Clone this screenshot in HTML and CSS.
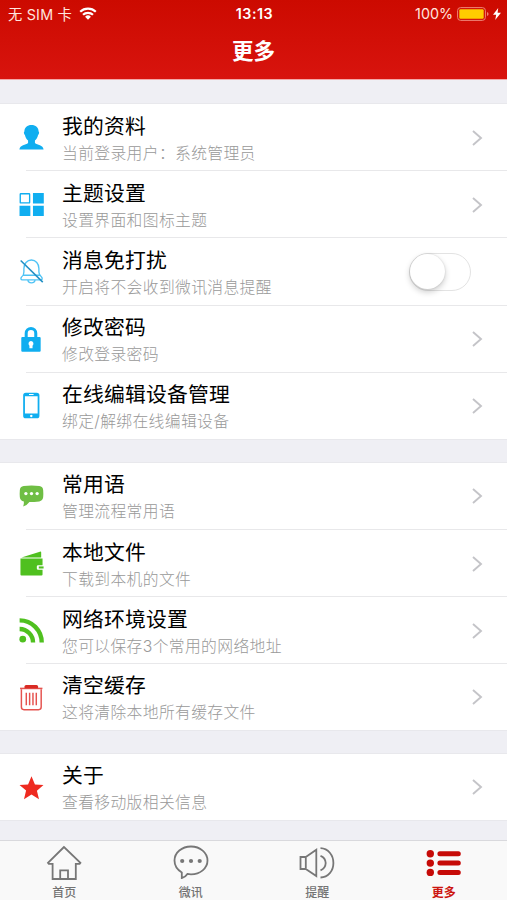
FILE: index.html
```
<!DOCTYPE html>
<html lang="zh-CN">
	<head>
		<meta charset="UTF-8" />
		<meta name="viewport" content="width=device-width, initial-scale=1" />
		<title>更多</title>
		<link rel="stylesheet" href="styles.css">
	</head>
	<body>
		<header>
			<div class="status-bar">
				<div class="status-left">
					<span>无 SIM 卡</span>
					<svg class="wifi" viewBox="0 0 18 13">
						<path d="M1.2 4.8a11.2 11.2 0 0 1 15.6 0M4 7.8a7.2 7.2 0 0 1 10 0" fill="none" stroke="#fff" stroke-width="2.2" />
						<path d="M9 12.8L6.1 9.8a4.1 4.1 0 0 1 5.8 0z" fill="#fff" />
					</svg>
				</div>
				<div class="status-time">13:13</div>
				<div class="status-right">
					<span>100%</span>
					<svg class="battery" viewBox="0 0 32 14">
						<rect x=".6" y=".6" width="27.8" height="12.8" rx="3" fill="none" stroke="#ef8577" />
						<rect x="2.3" y="2.3" width="24.4" height="9.4" rx="1.2" fill="#ffcc00" />
						<path d="M30 5v4q1.6-.6 1.6-2T30 5z" fill="#ef8577" />
					</svg>
					<svg class="bolt" viewBox="0 0 8 12"><path d="M5.2 0L0 6.8h3.2L2.2 12 8 4.8H4.6z" fill="#fff" /></svg>
				</div>
			</div>
			<h1>更多</h1>
		</header>

		<main>
			<section class="group">
				<div class="row">
					<svg class="icon blue" viewBox="0 0 24 24">
						<path d="M12 0C8 0 5.200 2.600 5.200 6.200c-.9.2-.5 2.800.5 3.400.5 2.400 1.500 4 3 5.300v2.300C6.500 19 .8 19 .4 23.600h23.200c-.4-4.600-6.100-4.600-8.300-6.400v-2.300c1.500-1.300 2.500-2.900 3-5.300 1-.6 1.400-3.200.5-3.400C18.800 2.600 16 0 12 0z" />
					</svg>
					<div class="text">
						<h2>我的资料</h2>
						<p>当前登录用户：系统管理员</p>
					</div>
					<svg class="chevron" viewBox="0 0 10 16"><path d="M1 1l8 7-8 7" /></svg>
				</div>
				<div class="row">
					<svg class="icon blue" viewBox="0 0 24 24">
						<rect x="1.2" y="1.700" width="9" height="8.800" rx=".5" fill="none" stroke="currentColor" stroke-width="1.3" />
						<path d="M13.400 1h10.400v10H13.400zM.5 13.300h10.400v9.700H.5zM13.400 13.300h10.400v9.700H13.400z" />
					</svg>
					<div class="text">
						<h2>主题设置</h2>
						<p>设置界面和图标主题</p>
					</div>
					<svg class="chevron" viewBox="0 0 10 16"><path d="M1 1l8 7-8 7" /></svg>
				</div>
				<div class="row">
					<svg class="icon sky line" viewBox="0 0 24 24">
						<path d="M2.500 17.300c1.800-1.300 2.200-2.200 2.200-4.800V9C4.700 4.500 7.700 1 11.900 1s7.200 3.500 7.200 8v3.500c0 2.600.7 3.500 2.500 4.800 1.200 1.200.7 2.800-.7 2.800H3.200c-1.400 0-1.900-1.600-.7-2.800zM4.500 15.600h15M8.600 20.200c0 3.600 6.800 3.600 6.800 0" />
						<path class="slash" d="M1.600 1.500l21.200 20.700" />
					</svg>
					<div class="text">
						<h2>消息免打扰</h2>
						<p>开启将不会收到微讯消息提醒</p>
					</div>
					<div class="switch"><div class="knob"></div></div>
				</div>
				<div class="row">
					<svg class="icon blue" viewBox="0 0 24 24">
						<path d="M6.900 11V6a4.600 4.600 0 0 1 9.200 0V11" fill="none" stroke="currentColor" stroke-width="2.900" />
						<path fill-rule="evenodd" d="M3.200 9.500h16.600q1 0 1 1v12.300q0 1-1 1H3.200q-1 0-1-1V10.500q0-1 1-1zM11.500 13.500a2.500 2.500 0 0 0-1.500 4.400v2.500h3v-2.500a2.500 2.500 0 0 0-1.500-4.400z" />
					</svg>
					<div class="text">
						<h2>修改密码</h2>
						<p>修改登录密码</p>
					</div>
					<svg class="chevron" viewBox="0 0 10 16"><path d="M1 1l8 7-8 7" /></svg>
				</div>
				<div class="row">
					<svg class="icon blue" viewBox="0 0 24 24">
						<path fill-rule="evenodd" d="M6.500-.3h10.600q2.500 0 2.500 2.500v19.600q0 2.500-2.500 2.500H6.500Q4 24.300 4 21.800V2.200Q4-.3 6.500-.3zM5.700 3v16.600h12.200V3zM9.600 1v.8H14V1zM11.800 20.800a1.200 1.200 0 1 0 .01 0z" />
					</svg>
					<div class="text">
						<h2>在线编辑设备管理</h2>
						<p>绑定/解绑在线编辑设备</p>
					</div>
					<svg class="chevron" viewBox="0 0 10 16"><path d="M1 1l8 7-8 7" /></svg>
				</div>
			</section>

			<section class="group">
				<div class="row">
					<svg class="icon green-soft" viewBox="0 0 24 24">
						<path d="M4.500 2Q12 .8 19.500 2q3.500.5 3.700 3.800.3 3.500 0 7-.4 3.400-3.700 3.900-5 .5-9.500.5-1.700 2.700-6 4.300.9-2.400.7-4.700Q1.100 16.200.8 12.800q-.3-3.500 0-7Q1 2.500 4.500 2z" />
						<circle cx="6.600" cy="9.200" r="1.600" fill="#fff" />
						<circle cx="12" cy="9.200" r="1.600" fill="#fff" />
						<circle cx="17.400" cy="9.200" r="1.600" fill="#fff" />
					</svg>
					<div class="text">
						<h2>常用语</h2>
						<p>管理流程常用语</p>
					</div>
					<svg class="chevron" viewBox="0 0 10 16"><path d="M1 1l8 7-8 7" /></svg>
				</div>
				<div class="row">
					<svg class="icon green" viewBox="0 0 24 24">
						<path d="M2.400 6.300L20 .6q1.300-.4 1.300 1v4.700z" />
						<path d="M1.400 7.200h21.200v6.400h-4.200q-1.300 0-1.300 1.300v1.800q0 1.300 1.300 1.300h4.200v4.600q0 1-1 1H2.400q-1 0-1-1z" />
						<path d="M19 14.800h4.600v2H19z" />
					</svg>
					<div class="text">
						<h2>本地文件</h2>
						<p>下载到本机的文件</p>
					</div>
					<svg class="chevron" viewBox="0 0 10 16"><path d="M1 1l8 7-8 7" /></svg>
				</div>
				<div class="row">
					<svg class="icon green" viewBox="0 0 24 24">
						<circle cx="3.600" cy="20.300" r="3.200" />
						<path d="M.6 10.600a13 13 0 0 1 12.900 13M.6 2.300a21.200 21.200 0 0 1 21.200 21.300" fill="none" stroke="currentColor" stroke-width="4.200" />
					</svg>
					<div class="text">
						<h2>网络环境设置</h2>
						<p>您可以保存3个常用的网络地址</p>
					</div>
					<svg class="chevron" viewBox="0 0 10 16"><path d="M1 1l8 7-8 7" /></svg>
				</div>
				<div class="row">
					<svg class="icon red-soft" viewBox="0 0 24 24">
						<path d="M1 3.300h21.500" fill="none" stroke="currentColor" stroke-width="1.500" />
						<path d="M5.300 3V1.500Q5.300 0 6.800 0h10q1.500 0 1.500 1.500V3z" fill="#d92b24" />
						<path d="M2.300 4v17.200q0 2.500 2.500 2.500h14q2.500 0 2.500-2.500V4M7 7.500v12M10.200 7.500v12M13.400 7.500v12M16.600 7.500v12" fill="none" stroke="currentColor" stroke-width="1.400" />
					</svg>
					<div class="text">
						<h2>清空缓存</h2>
						<p>这将清除本地所有缓存文件</p>
					</div>
					<svg class="chevron" viewBox="0 0 10 16"><path d="M1 1l8 7-8 7" /></svg>
				</div>
			</section>

			<section class="group">
				<div class="row">
					<svg class="icon red" viewBox="0 0 24 24">
						<path d="M12 1.300l3.300 7.700 8.200.6-6.300 5.400 2 8.300-7.200-4.500-7.200 4.500 2-8.300L.5 9.600l8.200-.6z" />
					</svg>
					<div class="text">
						<h2>关于</h2>
						<p>查看移动版相关信息</p>
					</div>
					<svg class="chevron" viewBox="0 0 10 16"><path d="M1 1l8 7-8 7" /></svg>
				</div>
			</section>
		</main>

		<nav>
			<a class="tab">
				<svg viewBox="0 0 36 36">
					<path d="M18 2L2 17.800l.8 1H6.600V34h23.200V18.800h3.800l.8-1zM14.200 34v-8.700h7.800V34" />
				</svg>
				<span>首页</span>
			</a>
			<a class="tab">
				<svg viewBox="0 0 36 36">
					<path d="M18 1.500C8.800 1.500 1.500 7.600 1.500 15.500c0 5 2.900 9.300 7.300 11.900V33q3.400-.7 5.600-4.100 1.700.4 3.600.4c9.200 0 16.500-6 16.500-13.800S27.200 1.500 18 1.500z" />
					<g class="dots">
						<circle cx="9.200" cy="16" r="2.100" />
						<circle cx="18" cy="16" r="2.100" />
						<circle cx="26.700" cy="16" r="2.100" />
					</g>
				</svg>
				<span>微讯</span>
			</a>
			<a class="tab">
				<svg viewBox="0 0 36 36">
					<path d="M1.500 12h5.300v12H1.500zM6.800 12L17.300 4.800V31L6.800 24zM21.500 10.800q5 2 5.200 7.200-.2 5.300-5.200 7.300M21.500 3.200C29.200 3.500 34.400 10 34.400 18s-5.200 14.200-12.900 14.500" />
				</svg>
				<span>提醒</span>
			</a>
			<a class="tab active">
				<svg viewBox="0 0 36 36">
					<circle cx="4.300" cy="8.800" r="3.700" />
					<circle cx="4.300" cy="18.100" r="3.700" />
					<circle cx="4.300" cy="27.400" r="3.700" />
					<path d="M13.900 8.800h18.400M13.900 18.100h18.400M13.900 27.400h18.400" />
				</svg>
				<span>更多</span>
			</a>
		</nav>
	</body>
</html>
```
FILE: styles.css
```
* {
	box-sizing: border-box;
}

body {
	margin: 0;
	height: 900px;
	display: flex;
	flex-direction: column;
	font-family: Inter, "Noto Sans CJK SC", sans-serif;
	background: #efeff4;
	overflow: hidden;
}

svg {
	display: block;
	flex: none;
	overflow: visible;
}

header {
	flex: none;
	height: 79px;
	background: linear-gradient(#cc0a00, #d8140e);
	box-shadow: 0 1px 0 #f3a9a8;
	color: #fff;
}

.status-bar {
	display: grid;
	grid-template-columns: 1fr auto 1fr;
	align-items: center;
	height: 27px;
	padding: 0 6px 0 8px;
	font-size: 14.3px;
}

.status-left,
.status-right {
	display: flex;
	align-items: center;
	color: #ffe5df;
}

.status-left {
	gap: 7px;
	letter-spacing: 0.2px;
}

.status-right {
	justify-content: flex-end;
	gap: 4px;
}

.status-time {
	font-weight: 600;
	letter-spacing: 0.5px;
}

.wifi {
	width: 18px;
	height: 13px;
}

.battery {
	width: 32px;
	height: 14px;
}

.bolt {
	width: 8px;
	height: 12px;
}

h1 {
	margin: 0;
	font-size: 21.5px;
	font-weight: 700;
	line-height: 49px;
	text-align: center;
}

main {
	flex: 1;
	min-height: 0;
	padding-top: 25px;
	overflow: hidden;
}

.group {
	margin-bottom: 24px;
	background: #fff;
	box-shadow: 0 0 0 1px #e8e8ec;
}

.row {
	position: relative;
	display: flex;
	align-items: center;
	height: 67.2px;
	padding: 0 25px 0 19px;
}

.row:last-child {
	height: 66px;
}

/* thin divider that starts under the icon */
.row + .row::before {
	content: "";
	position: absolute;
	top: -1px;
	left: 26px;
	right: 0;
	height: 1px;
	background: #e8e8ea;
}

.icon {
	width: 25px;
	height: 25px;
	fill: currentColor;
}

.line {
	fill: none;
	stroke: currentColor;
	stroke-width: 1.3;
}

.slash {
	stroke: #238fc4;
	stroke-width: 1.5;
}

.blue {
	color: #10aef0;
}

.sky {
	color: #4fc3f5;
}

.green {
	color: #4fc01f;
}

.green-soft {
	color: #6fbe44;
}

.red {
	color: #ee2a20;
}

.red-soft {
	color: #e5524e;
}

.text {
	flex: 1;
	margin-left: 18px;
	padding-top: 4px;
}

h2 {
	margin: 0;
	font-size: 20.8px;
	font-weight: 400;
	line-height: 27px;
	letter-spacing: 0.2px;
	color: #000;
}

p {
	margin: 0;
	font-size: 15.8px;
	font-weight: 300;
	line-height: 27px;
	letter-spacing: 0.35px;
	color: #999;
}

.chevron {
	width: 10px;
	height: 16px;
	fill: none;
	stroke: #c4c4c8;
	stroke-width: 1.9;
}

.switch {
	width: 62px;
	height: 38px;
	margin-right: 11px;
	border: 1.5px solid #e3e3e3;
	border-radius: 19px;
	background: #fff;
}

.knob {
	width: 35px;
	height: 35px;
	border-radius: 50%;
	background: #fff;
	box-shadow: 0 3px 6px rgba(0, 0, 0, 0.2), 0 0 2px rgba(0, 0, 0, 0.15);
}

nav {
	flex: none;
	display: grid;
	grid-template-columns: repeat(4, 1fr);
	height: 60px;
	padding: 4px 0 0 1px;
	border-top: 1px solid #d9d9dd;
	background: #f9f9f9;
}

.tab {
	display: flex;
	flex-direction: column;
	align-items: center;
	gap: 3px;
	color: #737373;
	font-size: 12px;
	font-weight: 500;
	line-height: 17px;
}

.tab svg {
	width: 36px;
	height: 36px;
	fill: none;
	stroke: #777;
	stroke-width: 1.8;
}

.tab .dots {
	fill: #777;
	stroke: none;
}

.tab.active {
	color: #cc1510;
	font-weight: 700;
}

.tab.active svg {
	stroke: #c60b08;
	stroke-width: 5;
	stroke-linecap: round;
}

.tab.active circle {
	fill: #c60b08;
	stroke: none;
}
```
